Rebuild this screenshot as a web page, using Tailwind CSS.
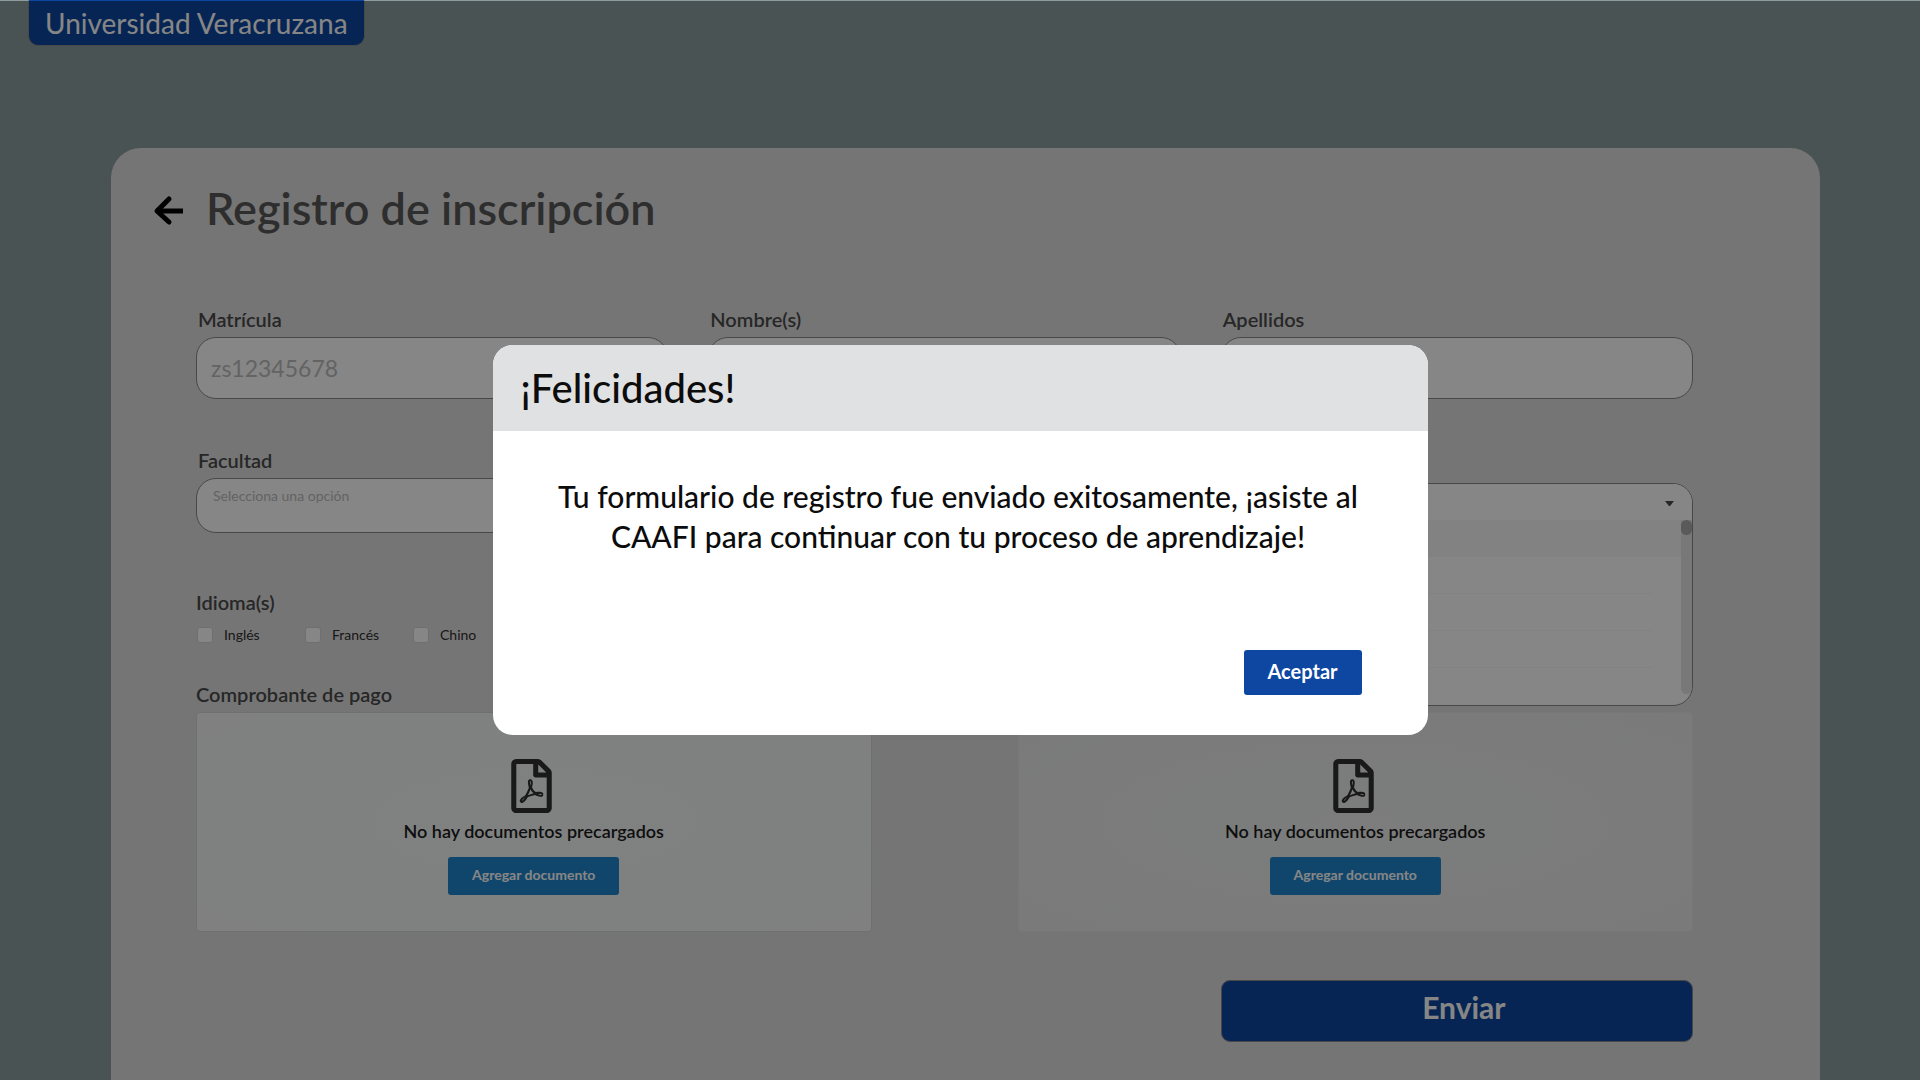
<!DOCTYPE html>
<html lang="es">
<head>
<meta charset="utf-8">
<meta name="viewport" content="width=device-width, initial-scale=1">
<title>Registro de inscripción</title>
<script src="https://cdn.jsdelivr.net/npm/@tailwindcss/browser@4"></script>
</head>
<body class="relative flex min-h-screen flex-col bg-[#8e9ea0] font-['Lato',sans-serif] text-[#4a4a4a]">
  <header class="mb-[102px] flex px-7">
    <p class="rounded-b-[10px] border border-t-0 border-[#898989] bg-[#0d47a1] px-4 pt-[3px] pb-px text-[28px] leading-[41px] text-white">Universidad Veracruzana</p>
  </header>

  <main class="mr-[100px] ml-[111px] flex-1 rounded-t-[30px] bg-[#dfdfdf] pr-[127px] pb-9 pl-[85px]">
    <div class="-ml-11 flex items-center gap-[22px] pt-[30px]">
      <a href="#" aria-label="Volver" class="mt-1 text-black">
        <svg class="h-8 w-8" viewBox="0 0 32 32" fill="none" stroke="currentColor" stroke-width="5" stroke-linecap="round" stroke-linejoin="round"><path d="M17 5 5 17l12 11"/><path d="M5 17h26" stroke-linecap="butt"/></svg>
      </a>
      <h1 class="text-[45px] leading-[60px] font-semibold text-[#585858]">Registro de inscripción</h1>
    </div>

    <form>
      <div class="mt-[67px] grid grid-cols-3 gap-x-10">
        <div>
          <label for="matricula" class="block pb-1 pl-[2px] text-xl font-semibold">Matrícula</label>
          <input id="matricula" placeholder="zs12345678" class="block h-[62px] w-full rounded-[20px] border border-[#898989] bg-white px-[14px] text-[23px] placeholder:text-[#bdbdbd]">
        </div>
        <div>
          <label for="nombre" class="block pb-1 pl-[2px] text-xl font-semibold">Nombre(s)</label>
          <input id="nombre" class="block h-[62px] w-full rounded-[20px] border border-[#898989] bg-white px-[14px] text-[23px]">
        </div>
        <div>
          <label for="apellidos" class="block pb-1 pl-[2px] text-xl font-semibold">Apellidos</label>
          <input id="apellidos" class="block h-[62px] w-full rounded-[20px] border border-[#898989] bg-white px-[14px] text-[23px]">
        </div>
      </div>

      <div class="mt-[47px] grid grid-cols-3 gap-x-10">
        <div>
          <label for="facultad" class="block pb-1 pl-[2px] text-xl font-semibold">Facultad</label>
          <select id="facultad" class="block h-[55px] w-full appearance-none rounded-[20px] border border-[#898989] bg-white px-4 pb-5 text-sm text-[#bdbdbd]">
            <option>Selecciona una opción</option>
          </select>
        </div>
        <div class="relative col-start-3 pt-[37px]">
          <div class="absolute inset-x-0 z-10 h-[223px] overflow-hidden rounded-[20px] border border-[#898989] bg-white">
            <div class="relative h-9">
              <select aria-label="Programa educativo" class="h-full w-full appearance-none bg-white px-4"><option></option></select>
              <svg class="pointer-events-none absolute top-[17px] right-[18px] h-[5px] w-[9px]" viewBox="0 0 9 5" fill="#4a4a4a"><path d="M0 0h9L5 5H4z"/></svg>
            </div>
            <div class="flex">
              <ul class="flex-1">
                <li class="h-[37px] bg-[#f7f7f7]"></li>
                <li class="mr-7 h-[37px] border-b border-[#f7f7f7]"></li>
                <li class="mr-7 h-[37px] border-b border-[#f7f7f7]"></li>
                <li class="mr-7 h-[37px] border-b border-[#f7f7f7]"></li>
              </ul>
              <div class="h-[174px] w-[11px] rounded-b-full bg-[#e4e4e4]"><div class="h-[15px] rounded-full bg-[#acacac]"></div></div>
            </div>
          </div>
        </div>
      </div>

      <fieldset class="mt-[55px]">
        <legend class="text-xl font-semibold">Idioma(s)</legend>
        <div class="mt-[9px] flex pl-px text-sm text-[#2e2e2e]">
          <label class="flex w-27 items-center gap-[11px]"><input type="checkbox" class="size-4 appearance-none rounded-[3px] border border-[#d4d4d4] bg-white">Inglés</label>
          <label class="flex w-27 items-center gap-[11px]"><input type="checkbox" class="size-4 appearance-none rounded-[3px] border border-[#d4d4d4] bg-white">Francés</label>
          <label class="flex w-27 items-center gap-[11px]"><input type="checkbox" class="size-4 appearance-none rounded-[3px] border border-[#d4d4d4] bg-white">Chino</label>
        </div>
      </fieldset>

      <div class="mt-[35px] grid grid-cols-2 gap-x-[146px]">
        <h2 class="pb-1 text-xl font-semibold">Comprobante de pago</h2>
        <section class="col-start-1 flex h-[220px] flex-col items-center rounded-[4px] border border-[#d4d6d5] bg-radial from-[#f3f6f5] to-[#f1f3f2] pt-[46px]">
          <svg class="mr-1 h-[54px] w-[41px]" viewBox="0 0 384 512" fill="#303030"><path d="M369.9 97.9L286 14C277 5 264.8-.1 252.1-.1H48C21.5 0 0 21.5 0 48v416c0 26.5 21.5 48 48 48h288c26.5 0 48-21.5 48-48V131.9c0-12.7-5.1-25-14.1-34zM332.1 128H256V51.9l76.1 76.1zM48 464V48h160v104c0 13.3 10.7 24 24 24h104v288H48zm250.2-143.7c-12.2-12-47-8.7-64.4-6.5-17.2-10.5-28.7-25-36.8-46.3 3.9-16.1 10.1-40.6 5.4-56-4.2-26.2-37.8-23.6-42.6-5.9-4.4 16.1-.4 38.5 7 67.1-10 23.9-24.9 56-35.4 74.4-20 10.3-47 26.2-51 46.2-3.3 15.8 26 55.2 76.1-31.2 22.4-7.4 46.8-16.5 68.4-20.1 18.9 10.2 41 17 55.8 17 25.5 0 28-28.2 17.5-38.7zm-198.1 77.8c5.1-13.7 24.5-29.5 30.4-35-19 30.3-30.4 35.7-30.4 35zm81.6-190.6c7.4 0 6.7 32.1 1.8 40.8-4.4-13.9-4.3-40.8-1.8-40.8zm-24.4 136.6c9.7-16.9 18-37 24.7-54.7 8.3 15.1 18.9 27.2 30.1 35.5-20.8 4.3-38.9 13.1-54.8 19.2zm131.6-5s-5 6-37.3-7.8c35.1-2.6 40.9 5.4 37.3 7.8z"/></svg>
          <p class="mt-1 text-lg leading-7 font-semibold text-[#1c1c1c]">No hay documentos precargados</p>
          <button type="button" class="mt-3 h-[38px] rounded-[3px] bg-[#1f86ce] px-6 pb-[2px] text-sm font-bold text-white">Agregar documento</button>
        </section>
        <section class="flex h-[220px] flex-col items-center rounded-[4px] border border-[#e3e3e3] bg-radial from-[#eceeed] to-[#e9e9e9] pt-[46px]">
          <svg class="mr-1 h-[54px] w-[41px]" viewBox="0 0 384 512" fill="#303030"><path d="M369.9 97.9L286 14C277 5 264.8-.1 252.1-.1H48C21.5 0 0 21.5 0 48v416c0 26.5 21.5 48 48 48h288c26.5 0 48-21.5 48-48V131.9c0-12.7-5.1-25-14.1-34zM332.1 128H256V51.9l76.1 76.1zM48 464V48h160v104c0 13.3 10.7 24 24 24h104v288H48zm250.2-143.7c-12.2-12-47-8.7-64.4-6.5-17.2-10.5-28.7-25-36.8-46.3 3.9-16.1 10.1-40.6 5.4-56-4.2-26.2-37.8-23.6-42.6-5.9-4.4 16.1-.4 38.5 7 67.1-10 23.9-24.9 56-35.4 74.4-20 10.3-47 26.2-51 46.2-3.3 15.8 26 55.2 76.1-31.2 22.4-7.4 46.8-16.5 68.4-20.1 18.9 10.2 41 17 55.8 17 25.5 0 28-28.2 17.5-38.7zm-198.1 77.8c5.1-13.7 24.5-29.5 30.4-35-19 30.3-30.4 35.7-30.4 35zm81.6-190.6c7.4 0 6.7 32.1 1.8 40.8-4.4-13.9-4.3-40.8-1.8-40.8zm-24.4 136.6c9.7-16.9 18-37 24.7-54.7 8.3 15.1 18.9 27.2 30.1 35.5-20.8 4.3-38.9 13.1-54.8 19.2zm131.6-5s-5 6-37.3-7.8c35.1-2.6 40.9 5.4 37.3 7.8z"/></svg>
          <p class="mt-1 text-lg leading-7 font-semibold text-[#1c1c1c]">No hay documentos precargados</p>
          <button type="button" class="mt-3 h-[38px] rounded-[3px] bg-[#1f86ce] px-6 pb-[2px] text-sm font-bold text-white">Agregar documento</button>
        </section>
      </div>

      <div class="mt-12 grid grid-cols-3 gap-x-10">
        <button type="submit" class="col-start-3 h-[62px] rounded-[9px] border border-[#898989] bg-[#0d47a1] pb-2 pl-[14px] text-[30px] font-bold text-white">Enviar</button>
      </div>
    </form>
  </main>

  <!-- Dimmed backdrop with the confirmation dialog -->
  <div class="absolute inset-x-0 top-px bottom-0 z-20 flex items-center justify-center bg-black/[47.5%]">
    <div role="dialog" aria-modal="true" aria-labelledby="dialog-title" class="mb-[2px] w-[935px] overflow-hidden rounded-[20px] bg-white">
      <h2 id="dialog-title" class="bg-[#e0e1e3] px-7 text-[40px] leading-[86px] font-medium text-[#0c0c0c]">¡Felicidades!</h2>
      <div class="px-[60px] pt-[45px] pb-10">
        <p class="pr-1 text-center text-[30px] leading-10 font-medium text-[#0c0c0c]">Tu formulario de registro fue enviado exitosamente, ¡asiste al CAAFI para continuar con tu proceso de aprendizaje!</p>
        <div class="mt-[94px] flex justify-end pr-[6px]">
          <button type="button" class="h-[45px] w-[118px] rounded-[3px] bg-[#0d47a1] pb-[2px] text-xl font-bold text-white">Aceptar</button>
        </div>
      </div>
    </div>
  </div>
</body>
</html>
